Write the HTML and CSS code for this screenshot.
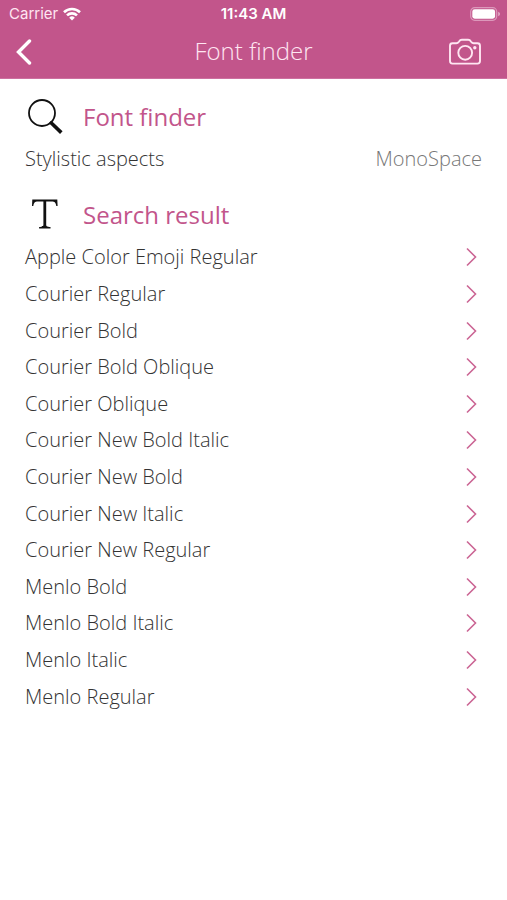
FILE: index.html
```html
<!DOCTYPE html>
<html lang="en">
<head>
<meta charset="utf-8">
<meta name="viewport" content="width=device-width, initial-scale=1">
<title>Font finder</title>
<link rel="stylesheet" href="styles.css">
</head>
<body>
<header class="top">
  <div class="status">
    <div class="carrier">
      <span>Carrier</span>
      <svg width="18" height="14" viewBox="0 0 18 14" aria-hidden="true">
        <g fill="none" stroke="#fff" stroke-width="2.6">
          <path d="M1 5.200a11.500 11.500 0 0 1 16 0"/>
          <path d="M4 8.400a7.200 7.200 0 0 1 10 0"/>
        </g>
        <path fill="#fff" d="M6.200 10.700a4 4 0 0 1 5.600 0L9 13.600z"/>
      </svg>
    </div>
    <span class="time">11:43 AM</span>
    <svg class="battery" width="31" height="14" viewBox="0 0 31 14" aria-hidden="true">
      <rect x=".7" y=".7" width="26" height="12.600" rx="4" fill="none" stroke="#dc98bb" stroke-width="1.200"/>
      <rect x="2.300" y="2.300" width="22.800" height="9.400" rx="2.400" fill="#fff"/>
      <path fill="#e2a9c6" d="M28.200 4.800c2.400 1 2.400 3.400 0 4.400z"/>
    </svg>
  </div>
  <nav class="bar">
    <button class="icon-button back" type="button" aria-label="Back">
      <svg width="18" height="28" viewBox="0 -1 18 28"><path d="M14.500 3 3.500 14l11 11" fill="none" stroke="#fff" stroke-width="3.400" stroke-linecap="round"/></svg>
    </button>
    <h1>Font finder</h1>
    <button class="icon-button camera" type="button" aria-label="Camera">
      <svg width="34" height="28" viewBox="0 -1 34 28" fill="none" stroke="#ffe6f2" stroke-width="1.900">
        <path d="M4.500 5.200h3.800c1.200 0 1.800-.4 2.600-1.500.9-1.400 1.600-1.900 3-1.900h6.200c1.400 0 2.100.5 3 1.900.8 1.100 1.400 1.500 2.600 1.500h3.800c1.700 0 2.500.9 2.500 2.500v15.400c0 1.600-.8 2.500-2.500 2.500h-25c-1.700 0-2.500-.9-2.500-2.500V7.700c0-1.600.8-2.500 2.500-2.500z"/>
        <circle cx="17.200" cy="14.800" r="6.900"/>
        <circle cx="26.800" cy="9.800" r="1.700" fill="#ffe6f2" stroke="none"/>
      </svg>
    </button>
  </nav>
</header>
<main>
  <section>
    <h2>
      <svg width="40" height="38" viewBox="0 0 40 38" aria-hidden="true">
        <circle cx="17" cy="15" r="13" fill="none" stroke="#111" stroke-width="1.800"/>
        <path d="M25.800 24.500 36.300 34.600" stroke="#111" stroke-width="3.600"/>
        <path d="M25 23.700l2 2" stroke="#111" stroke-width="2"/>
      </svg>
      Font finder
    </h2>
    <div class="setting"><span>Stylistic aspects</span><span class="value">MonoSpace</span></div>
  </section>
  <section>
    <h2>
      <svg width="40" height="38" viewBox="0 0 40 38" aria-hidden="true">
        <path fill="#111" d="M7.300 3.500h25l.3 6.500h-1.300c-.5-3.400-1.400-4.600-4.800-4.600H21.200v23.200c0 1.900.8 2.300 4.300 2.500v1.500H14.100v-1.500c3.500-.2 4.300-.6 4.300-2.500V5.400h-5.300c-3.400 0-4.300 1.200-4.800 4.600H7z"/>
      </svg>
      Search result
    </h2>
    <ul class="results"></ul>
  </section>
</main>
<script src="fonts.js"></script>
</body>
</html>
```
FILE: styles.css
```css
* { box-sizing: border-box; }

body {
  margin: 0;
  background: #fff;
  color: #333;
  font: 300 20px/24px "Open Sans", sans-serif;
}

h1, h2 { margin: 0; }

.top {
  background: #c2558b;
  border-bottom: 1px solid #cd70a0;
  color: #fff;
}

.status {
  display: grid;
  grid-template-columns: 1fr auto 1fr;
  align-items: center;
  height: 27px;
  padding: 0 6px;
  font: 400 15px/20px Inter, sans-serif;
}

.carrier {
  display: flex;
  align-items: center;
  gap: 5px;
  padding-left: 3px;
  color: #ffe6f2;
}

.time { font-weight: 600; }

.battery { justify-self: end; }

.bar {
  display: grid;
  grid-template-columns: 1fr auto 1fr;
  align-items: center;
  height: 51px;
  padding: 0 25px 4px;
}

.bar h1 {
  color: #ffe6f2;
  font-size: 24px;
  font-weight: 300;
  line-height: 32px;
}

.icon-button {
  display: flex;
  padding: 0;
  border: 0;
  background: none;
}

.back {
  justify-self: start;
  margin-left: -10px;
}

.camera { justify-self: end; }

main { padding: 17px 25px; }

section + section { margin-top: 17px; }

h2 {
  display: flex;
  align-items: center;
  gap: 18px;
  height: 42px;
  margin-bottom: 3px;
  color: #c2558b;
  font-size: 24px;
  font-weight: 400;
  line-height: 32px;
}

.setting {
  display: flex;
  justify-content: space-between;
  height: 36px;
  align-items: center;
}

.value { color: #777; }

.results {
  display: grid;
  grid-auto-rows: 1fr;
  min-height: 476px;
  margin: 0;
  padding: 0;
  list-style: none;
}

.results a {
  display: flex;
  align-items: center;
  justify-content: space-between;
  height: 100%;
  padding-right: 5px;
  color: inherit;
  text-decoration: none;
}
```
FILE: fonts.js
```js
const fonts = [
  "Apple Color Emoji Regular",
  "Courier Regular",
  "Courier Bold",
  "Courier Bold Oblique",
  "Courier Oblique",
  "Courier New Bold Italic",
  "Courier New Bold",
  "Courier New Italic",
  "Courier New Regular",
  "Menlo Bold",
  "Menlo Bold Italic",
  "Menlo Italic",
  "Menlo Regular"
];

document.querySelector(".results").innerHTML = fonts.map(name => `
  <li><a href="#">${name}
    <svg width="12" height="20" viewBox="0 0 12 20" aria-hidden="true">
      <path d="M2 1.500 10.500 10 2 18.500" fill="none" stroke="#cb6594" stroke-width="1.600"/>
    </svg>
  </a></li>`).join("");
```
